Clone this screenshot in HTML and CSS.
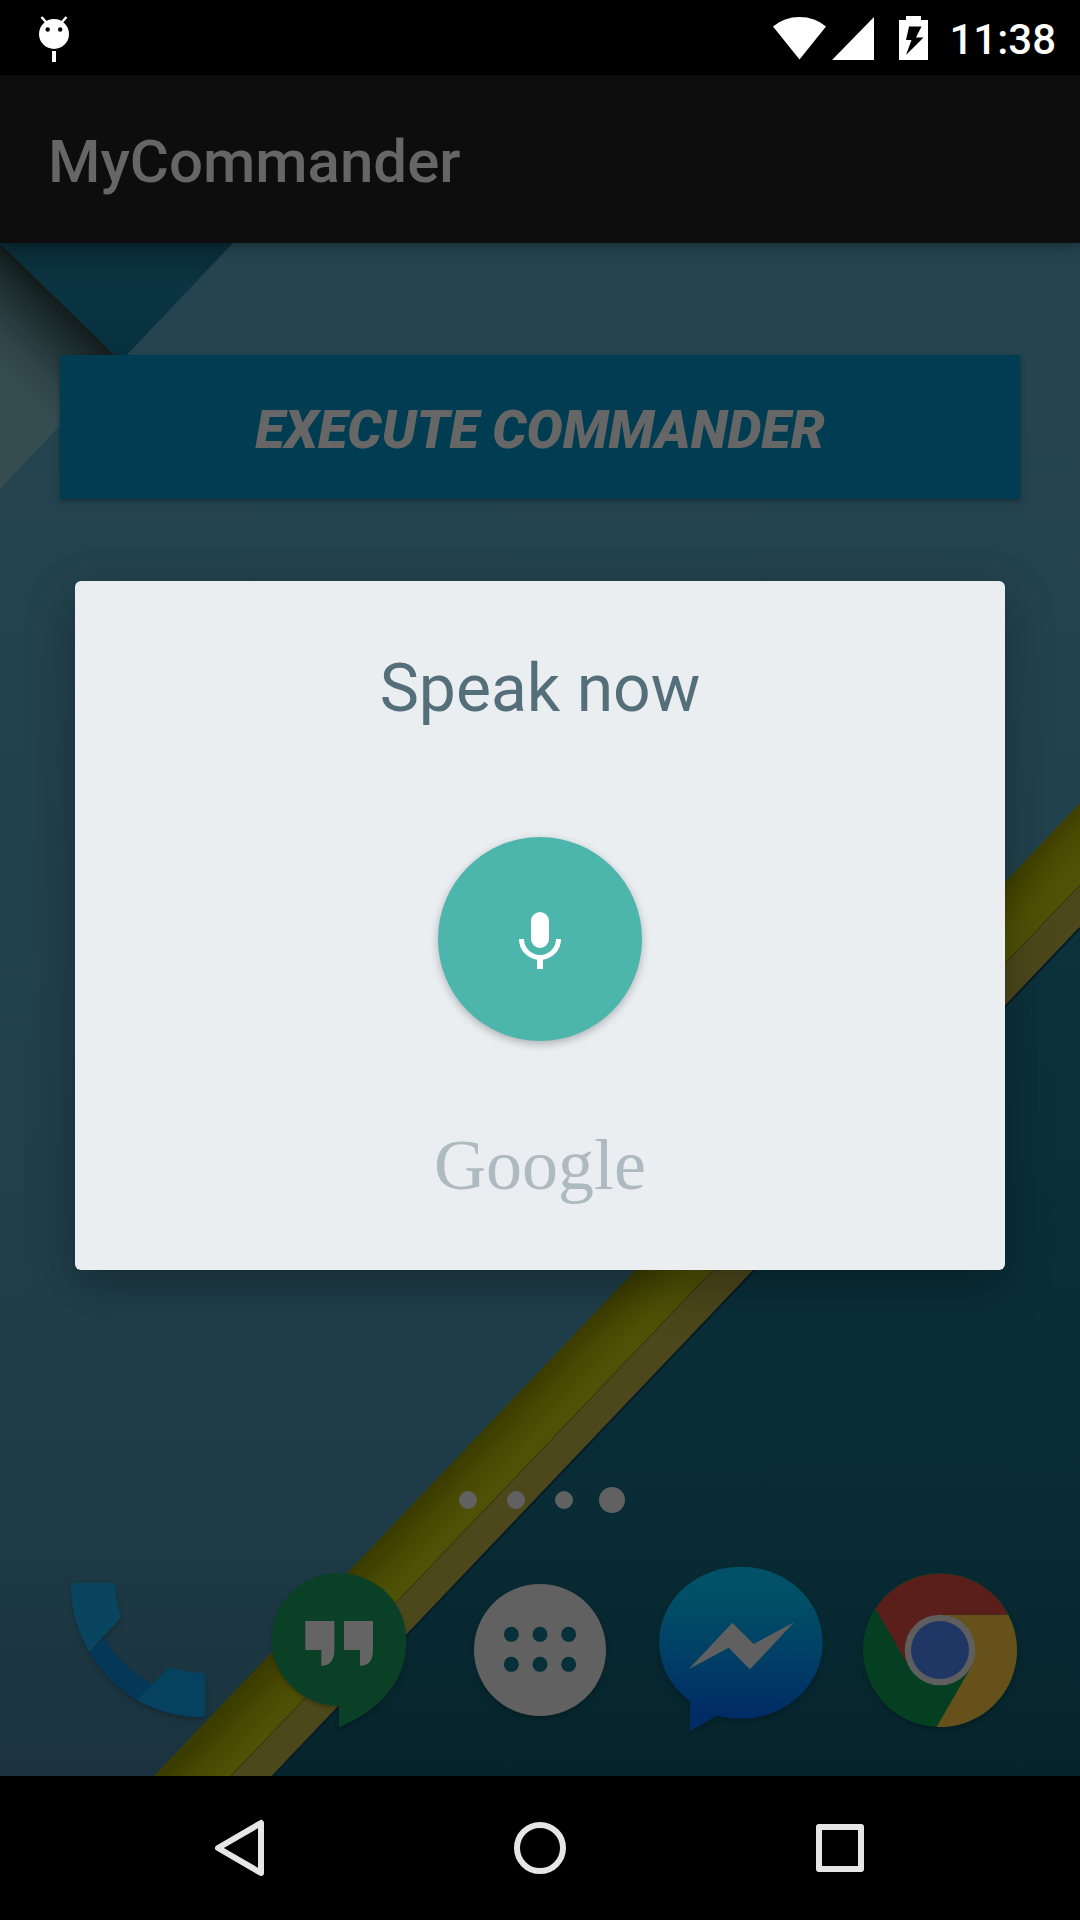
FILE: index.html
```html
<!DOCTYPE html>
<html lang="en">
<head>
<meta charset="utf-8">
<meta name="viewport" content="width=device-width, initial-scale=1">
<title>MyCommander</title>
<link rel="stylesheet" href="styles.css">
</head>
<body>
<div class="screen">
  <header class="status-bar">
    <svg class="status-debug" viewBox="36 12 36 52" aria-hidden="true">
      <path d="M41.500 17L46 22M66.500 17L62 22" stroke="#fff" stroke-width="2.500"/>
      <circle cx="54" cy="34" r="15" fill="#fff"/>
      <circle cx="47.700" cy="29.500" r="2.200"/><circle cx="60.200" cy="29.500" r="2.200"/>
      <path d="M52 51h4v11h-4z" fill="#fff"/>
    </svg>
    <div class="status-system">
      <svg class="status-icons" viewBox="772 12 158 50" fill="#fff" aria-hidden="true">
        <path d="M773 25.500Q784 16 799.500 16T826 25.500L799.500 58.500z"/>
        <path d="M832 59L874 16V59z"/>
        <path d="M906 15h15v4h7v40h-29V19h7z"/>
        <path d="M909 25.500h12.500L916 36.500h7.500L906 54l5.500-15H906z" fill="#000"/>
      </svg>
      <time class="clock">11:38</time>
    </div>
  </header>

  <div class="app">
    <div class="app-bar"><h1 class="app-title">MyCommander</h1></div>
    <main class="home">
      <svg class="wallpaper" viewBox="0 243 1080 1533" preserveAspectRatio="xMidYMid slice" aria-hidden="true">
        <defs>
          <linearGradient id="sheet" x1="0" y1="0" x2="0" y2="1">
            <stop offset="0" stop-color="#25444f"/><stop offset=".3" stop-color="#22424e"/>
            <stop offset=".75" stop-color="#1f3e4a"/><stop offset="1" stop-color="#1a333e"/>
          </linearGradient>
          <linearGradient id="fold" gradientUnits="userSpaceOnUse" x1="60" y1="300" x2="-5" y2="368">
            <stop offset="0" stop-color="#121b1b"/><stop offset=".3" stop-color="#1f2f31"/>
            <stop offset=".7" stop-color="#2f4549"/><stop offset="1" stop-color="#354c50"/>
          </linearGradient>
          <linearGradient id="flap" x1="0" y1="0" x2="0" y2="1">
            <stop offset="0" stop-color="#092c38"/><stop offset=".4" stop-color="#0b3442"/><stop offset="1" stop-color="#07303f"/>
          </linearGradient>
          <linearGradient id="yellow" gradientUnits="userSpaceOnUse" x1="617" y1="1290" x2="647" y2="1318">
            <stop offset="0" stop-color="#3b3c00"/><stop offset=".5" stop-color="#474802"/><stop offset="1" stop-color="#4f5106"/>
          </linearGradient>
          <linearGradient id="deep" x1="0" y1="0" x2="0" y2="1">
            <stop offset="0" stop-color="#0c323c"/><stop offset=".6" stop-color="#092d37"/><stop offset="1" stop-color="#06242c"/>
          </linearGradient>
        </defs>
        <path d="M0 243h1080v1533H0z" fill="url(#sheet)"/>
        <path d="M0 243L121 361L0 489z" fill="url(#fold)"/>
        <path d="M0 243H233L121 361z" fill="url(#flap)"/>
        <path d="M1080 927V1776H272z" fill="url(#deep)"/>
        <path d="M1080 803V885L231 1776H154z" fill="url(#yellow)"/>
        <path d="M1080 885V927L272 1776H231z" fill="#4c481b"/>
        <path d="M1080 885L231 1776" stroke="#34340a" stroke-width="1"/>
        <path d="M1080 928L273 1776" stroke="#061c28" stroke-width="2"/>
      </svg>
      <button class="execute" type="button">EXECUTE COMMANDER</button>
      <div class="launcher">
        <div class="pages"><i class="page"></i><i class="page"></i><i class="page"></i><i class="page page-current"></i></div>
        <nav class="dock" aria-label="Favorites">
          <button class="dock-item" type="button" aria-label="Phone">
            <svg class="dock-icon" viewBox="42 318 504 504">
              <path d="M148 575L192 533Q240 615 335 672L290 720Q200 665 148 575z" fill="#053756"/>
              <path d="M93 380Q93 368 105 368H214Q226 368 226 380Q227 425 240 465Q242 473 236 480L148 575Q93 480 93 380z" fill="#0a4560"/>
              <path d="M380 628Q385 622 394 625Q440 637 483 638Q495 638 495 650V760Q495 771 484 771Q380 770 290 720z" fill="#04425f"/>
            </svg>
          </button>
          <button class="dock-item" type="button" aria-label="Hangouts">
            <svg class="dock-icon" viewBox="645 318 504 504">
              <path d="M897 340A202 198 0 0 0 897 737V802Q1099 715 1099 540A202 200 0 0 0 897 340z" fill="#0a4126"/>
              <path d="M796 483H883V570Q883 616 844 618V570H796zM912 483H999V570Q999 616 960 618V570H912z" fill="#646464"/>
            </svg>
          </button>
          <button class="dock-item" type="button" aria-label="Apps">
            <svg class="dock-icon" viewBox="108 318 504 504">
              <circle cx="360" cy="570" r="198" fill="#616161"/>
              <g fill="#07303a">
                <circle cx="274" cy="523" r="22.500"/><circle cx="360" cy="523" r="22.500"/><circle cx="446" cy="523" r="22.500"/>
                <circle cx="274" cy="613" r="22.500"/><circle cx="360" cy="613" r="22.500"/><circle cx="446" cy="613" r="22.500"/>
              </g>
            </svg>
          </button>
          <button class="dock-item" type="button" aria-label="Messenger">
            <svg class="dock-icon" viewBox="51 78 504 504">
              <linearGradient id="chat" gradientUnits="userSpaceOnUse" x1="0" y1="80" x2="0" y2="573">
                <stop offset=".15" stop-color="#005166"/><stop offset=".55" stop-color="#003f66"/><stop offset=".9" stop-color="#002c66"/>
              </linearGradient>
              <path d="M303 80C438 80 548 180 548 308S438 536 303 536Q266 536 232 527L150 573V484C92 440 58 378 58 308C58 180 168 80 303 80z" fill="url(#chat)"/>
              <path d="M146 388L277 248L341 312L462 247L330 388L266 323z" fill="#606060"/>
            </svg>
          </button>
          <button class="dock-item" type="button" aria-label="Chrome">
            <svg class="dock-icon" viewBox="654 78 504 504">
              <circle cx="900" cy="330" r="231" fill="#053f22"/>
              <path d="M900 224H1105A231 231 0 0 1 890 561L992 383z" fill="#66511a"/>
              <path d="M707 206A231 231 0 0 1 1105 224H900L800 368z" fill="#5a1f1a"/>
              <circle cx="900" cy="330" r="106" fill="#5e5e5e"/>
              <circle cx="900" cy="330" r="87" fill="#203766"/>
            </svg>
          </button>
        </nav>
      </div>
    </main>

    <div class="overlay">
      <section class="dialog" role="dialog" aria-labelledby="prompt">
        <h2 class="prompt" id="prompt">Speak now</h2>
        <button class="mic" type="button" aria-label="Stop listening">
          <svg class="mic-icon" viewBox="510 909 60 60" fill="none">
            <rect x="531" y="912" width="18" height="36" rx="9" fill="#fff"/>
            <path d="M521.500 939a18.500 18.500 0 0 0 37 0" stroke="#fff" stroke-width="5"/>
            <path d="M537 958h6v11h-6z" fill="#fff"/>
          </svg>
        </button>
        <p class="brand">Google</p>
      </section>
    </div>
  </div>

  <nav class="nav-bar" aria-label="System">
    <button class="nav-button" type="button" aria-label="Back">
      <svg class="nav-icon" viewBox="210 1818 60 60"><path d="M218 1848L261 1823V1873z"/></svg>
    </button>
    <button class="nav-button" type="button" aria-label="Home">
      <svg class="nav-icon" viewBox="510 1818 60 60"><circle cx="540" cy="1848" r="23"/></svg>
    </button>
    <button class="nav-button" type="button" aria-label="Recent apps">
      <svg class="nav-icon" viewBox="810 1818 60 60"><rect x="819" y="1827" width="42" height="42"/></svg>
    </button>
  </nav>
</div>
</body>
</html>
```

FILE: styles.css
```css
* {
  box-sizing: border-box;
}

body {
  margin: 0;
  background: #000;
  font-family: Roboto, "Noto Sans", sans-serif;
}

h1, h2, p {
  margin: 0;
}

button {
  padding: 0;
  border: 0;
  background: none;
  font-family: inherit;
}

svg {
  display: block;
}

.screen {
  display: flex;
  flex-direction: column;
  min-height: 100vh;
}

/* Status bar */
.status-bar {
  display: flex;
  align-items: center;
  justify-content: space-between;
  height: 75px;
  padding: 0 24px 0 36px;
  background: #000;
}

.status-debug {
  width: 36px;
  height: 52px;
}

.status-system {
  display: flex;
  align-items: center;
  gap: 19px;
}

.status-icons {
  width: 158px;
  height: 50px;
}

.clock {
  padding-top: 4px;
  color: #fff;
  font-size: 42px;
  font-weight: 500;
  line-height: 48px;
}

/* Application, dimmed behind the dialog */
.app {
  position: relative;
  display: flex;
  flex: 1;
  flex-direction: column;
}

.app-bar {
  position: relative;
  z-index: 1;
  display: flex;
  align-items: center;
  height: 168px;
  padding: 6px 48px 0;
  background: #0d0d0d;
  box-shadow: 0 2px 16px rgba(0, 0, 0, 0.4);
}

.app-title {
  color: #666;
  font-size: 60px;
  font-weight: 500;
  line-height: 72px;
}

.home {
  position: relative;
  display: flex;
  flex: 1;
  flex-direction: column;
  justify-content: space-between;
  padding: 112px 0 42px;
}

.wallpaper {
  position: absolute;
  inset: 0;
  width: 100%;
  height: 100%;
}

.execute {
  position: relative;
  height: 144px;
  margin: 0 60px;
  padding-top: 4px;
  background: #003c52;
  box-shadow: 0 2px 5px rgba(0, 0, 0, 0.35);
  color: #666;
  font-size: 54px;
  font-style: italic;
  font-weight: 900;
}

.launcher {
  position: relative;
  display: flex;
  flex-direction: column;
  gap: 52px;
}

.pages {
  display: flex;
  align-items: center;
  justify-content: center;
  gap: 30px;
  height: 28px;
}

.page {
  width: 18px;
  height: 18px;
  border-radius: 50%;
  background: #616161;
}

.page-current {
  width: 26px;
  height: 26px;
  margin: 0 -4px;
}

.dock {
  display: flex;
  padding: 0 38px;
}

.dock-item {
  display: flex;
  flex: 1;
  justify-content: center;
}

.dock-icon {
  width: 168px;
  height: 168px;
  filter: drop-shadow(0 3px 2px rgba(0, 0, 0, 0.2));
}

/* Voice prompt */
.overlay {
  position: absolute;
  inset: 0;
  z-index: 2;
  display: grid;
  align-items: center;
  padding: 0 75px;
}

.dialog {
  display: flex;
  flex-direction: column;
  align-items: center;
  padding: 68px 48px 63px;
  border-radius: 6px;
  background: #eaeef1;
  box-shadow: 0 16px 48px rgba(0, 0, 0, 0.3);
}

.prompt {
  color: #546e7a;
  font-size: 66px;
  font-weight: 400;
  line-height: 80px;
}

.mic {
  display: grid;
  place-items: center;
  width: 204px;
  height: 204px;
  margin: 108px 0 82px;
  border-radius: 50%;
  background: #4db6ac;
  box-shadow: 0 3px 8px rgba(0, 0, 0, 0.25);
}

.mic-icon {
  width: 60px;
  height: 60px;
}

.brand {
  color: #adbac0;
  font-family: "Liberation Serif", serif;
  font-size: 72px;
  line-height: 84px;
}

/* System navigation */
.nav-bar {
  display: flex;
  height: 144px;
  padding: 0 90px;
  background: #000;
}

.nav-button {
  display: grid;
  flex: 1;
  place-items: center;
}

.nav-icon {
  width: 60px;
  height: 60px;
  fill: none;
  stroke: #e6e6e6;
  stroke-width: 6;
  stroke-linejoin: round;
}
```
